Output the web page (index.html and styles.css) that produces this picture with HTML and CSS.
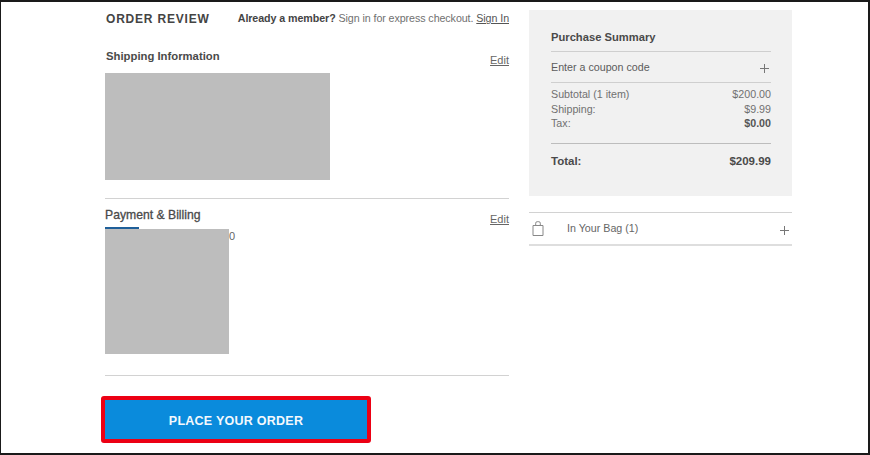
FILE: index.html
```html
<!DOCTYPE html>
<html lang="en">
<head>
<meta charset="utf-8">
<title>Order Review</title>
<link rel="stylesheet" href="styles.css">
</head>
<body>
<div class="frame">
  <main class="review">
    <header class="review-head">
      <h1>ORDER REVIEW</h1>
      <p><b>Already a member?</b> Sign in for express checkout. <a href="#">Sign In</a></p>
    </header>
    <section class="shipping">
      <div class="sec-head">
        <h2>Shipping Information</h2>
        <a href="#" class="edit">Edit</a>
      </div>
      <div class="redact redact-ship"></div>
    </section>
    <section class="payment">
      <div class="sec-head">
        <h2 class="pay-title">Payment &amp; Billing</h2>
        <a href="#" class="edit">Edit</a>
      </div>
      <div class="tab-line"></div>
      <div class="pay-row">
        <div class="redact redact-pay"></div>
        <span class="stray">0</span>
      </div>
    </section>
    <div class="cta-wrap">
      <button class="cta">PLACE YOUR ORDER</button>
    </div>
  </main>
  <aside class="side">
    <div class="summary">
      <h2>Purchase Summary</h2>
      <div class="coupon"><span>Enter a coupon code</span><span class="plus"><svg viewBox="0 0 9 9" width="9" height="9"><path d="M4.5 0v9M0 4.5h9"/></svg></span></div>
      <div class="lines">
        <div class="line"><span>Subtotal (1 item)</span><span>$200.00</span></div>
        <div class="line"><span>Shipping:</span><span>$9.99</span></div>
        <div class="line"><span>Tax:</span><b>$0.00</b></div>
      </div>
      <div class="total"><span>Total:</span><span>$209.99</span></div>
    </div>
    <div class="bag">
      <svg class="bag-icon" viewBox="0 0 12 15" width="12" height="15"><path d="M1 4.5h10v10H1zM3.7 4.5V2.2q0-1.5 1.5-1.5h1.6q1.5 0 1.5 1.5v2.3"/></svg>
      <span class="bag-label">In Your Bag (1)</span>
      <span class="plus"><svg viewBox="0 0 9 9" width="9" height="9"><path d="M4.5 0v9M0 4.5h9"/></svg></span>
    </div>
  </aside>
</div>
</body>
</html>
```
FILE: styles.css
```css
* { box-sizing: border-box; }
html, body { margin: 0; padding: 0; background: #fff; }
body { font-family: "Liberation Sans", Arial, sans-serif; color: #555; font-size: 12px; }
.frame {
  width: 870px; height: 455px; overflow: hidden;
  border: solid #1a1a1a; border-width: 2px 2px 2px 1px;
  display: flex; align-items: flex-start; gap: 20px;
  padding-left: 104px;
}
h1, h2, p { margin: 0; font-weight: normal; }
a { color: #555; }
.review { width: 404px; }
.review-head { display: flex; justify-content: space-between; align-items: flex-start; height: 46px; padding-top: 9px; }
.review-head h1 { font-size: 12px; font-weight: bold; letter-spacing: .8px; color: #444; line-height: 15px; margin: 1px 0 0 1px; }
.review-head p { font-size: 10.7px; line-height: 14px; color: #707070; letter-spacing: -.08px; }
.review-head b { color: #444; }
.sec-head { display: flex; justify-content: space-between; align-items: flex-start; }
.sec-head h2 { font-size: 11.3px; font-weight: bold; color: #4a4a4a; line-height: 16px; padding-left: 1px; }
.sec-head h2.pay-title { padding-left: 0; font-size: 12.2px; font-weight: normal; -webkit-text-stroke: .3px #4a4a4a; }
.edit { font-size: 11px; line-height: 14px; margin-top: 5px; color: #666; }
.shipping { height: 151px; border-bottom: 1px solid #d2d2d2; }
.redact { background: #bdbdbd; }
.redact-ship { width: 225px; height: 107px; margin-top: 6px; }
.payment { height: 177px; border-bottom: 1px solid #d2d2d2; padding-top: 8px; }
.tab-line { width: 34px; height: 2px; background: #1f5f99; margin-top: 1px; }
.pay-row { display: flex; align-items: flex-start; }
.redact-pay { width: 124px; height: 125px; flex: none; }
.stray { font-size: 11px; line-height: 14px; color: #666; }
.cta-wrap { padding-top: 20px; }
.cta {
  display: block; width: 270px; height: 47px; margin-left: -4px; padding-top: 3px;
  background: #0a8bdc; color: #f4f9fd;
  border: 4px solid #ec0014; border-radius: 3px; outline: none;
  font: bold 12.5px "Liberation Sans", Arial, sans-serif; letter-spacing: .25px;
}
.side { width: 263px; padding-top: 8px; }
.summary { background: #f1f1f1; height: 186px; padding: 20px 21px 0 22px; }
.summary h2 { font-size: 11.2px; font-weight: bold; color: #4a4a4a; line-height: 15px; height: 22px; border-bottom: 1px solid #cfcfcf; }
.coupon { display: flex; justify-content: space-between; align-items: flex-start; height: 31px; border-bottom: 1px solid #cfcfcf; padding-top: 8px; font-size: 10.7px; line-height: 14px; color: #5c5c5c; }
.plus { display: block; line-height: 0; }
.plus svg { display: block; margin-top: 4px; }
.plus path { stroke: #777; stroke-width: 1; fill: none; }
.coupon .plus { margin-right: 2px; }
.lines { padding-top: 4px; height: 61px; border-bottom: 1px solid #bdbdbd; }
.line { display: flex; justify-content: space-between; font-size: 10.7px; line-height: 14.5px; color: #707070; }
.line b { color: #555; }
.total { display: flex; justify-content: space-between; font-size: 11.5px; font-weight: bold; color: #4a4a4a; line-height: 15px; padding-top: 10px; }
.bag { display: flex; align-items: center; margin-top: 16px; height: 34px; border-top: 1px solid #d2d2d2; border-bottom: 2px solid #dedede; padding-left: 3px; }
.bag-icon path { fill: none; stroke: #888; stroke-width: 1; }
.bag-label { font-size: 10.7px; line-height: 14px; color: #666; margin-left: 23px; flex: 1; margin-top: -2px; }
.bag .plus { margin-right: 3px; }
```
